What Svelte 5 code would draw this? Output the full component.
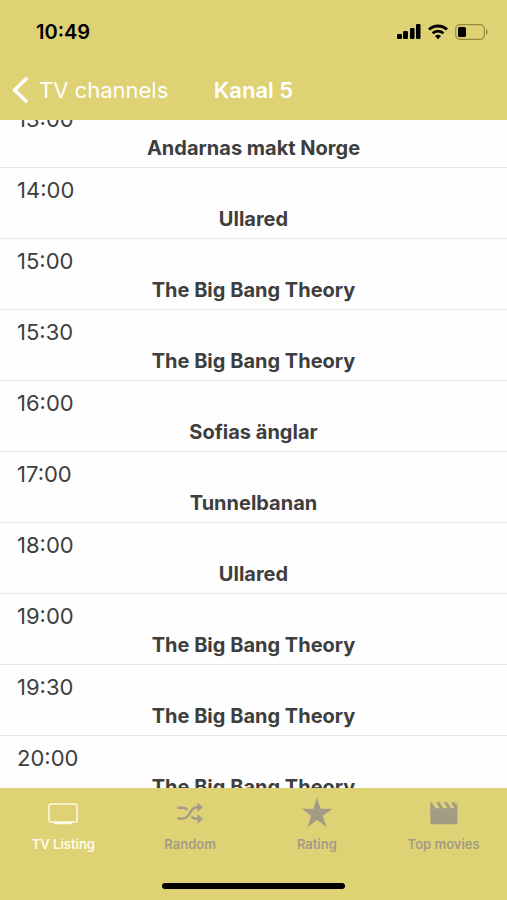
<script lang="ts">
    import { onMount } from 'svelte';

    type Show = { time: string; title: string };

    const shows: Show[] = [
        { time: '13:00', title: 'Andarnas makt Norge' },
        { time: '14:00', title: 'Ullared' },
        { time: '15:00', title: 'The Big Bang Theory' },
        { time: '15:30', title: 'The Big Bang Theory' },
        { time: '16:00', title: 'Sofias änglar' },
        { time: '17:00', title: 'Tunnelbanan' },
        { time: '18:00', title: 'Ullared' },
        { time: '19:00', title: 'The Big Bang Theory' },
        { time: '19:30', title: 'The Big Bang Theory' },
        { time: '20:00', title: 'The Big Bang Theory' },
    ];

    const tabs = [
        { id: 'listing', label: 'TV Listing' },
        { id: 'random', label: 'Random' },
        { id: 'rating', label: 'Rating' },
        { id: 'movies', label: 'Top movies' },
    ];

    let active = $state('listing');
    let list: HTMLElement;

    onMount(() => {
        list.scrollTop = 23;
    });
</script>

<div class="screen">
    <header>
        <div class="status">
            <span class="clock">10:49</span>
            <div class="status-icons">
                <svg width="24" height="16" viewBox="0 0 24 16">
                    <rect x="0" y="10" width="5" height="5" rx="1.2" />
                    <rect x="6" y="7" width="5" height="8" rx="1.2" />
                    <rect x="13" y="4" width="4.500" height="11" rx="1.2" />
                    <rect x="19" y="0" width="4.500" height="15" rx="1.2" />
                </svg>
                <svg width="20" height="16" viewBox="0 0 20 16">
                    <g fill="none" stroke="#000" stroke-width="2.8">
                        <path d="M1 5.600a13 13 0 0 1 18 0" />
                        <path d="M4.600 9.300a7.800 7.800 0 0 1 10.800 0" />
                    </g>
                    <path d="M10 15.200l-3-3.100a4.300 4.300 0 0 1 6 0z" />
                </svg>
                <svg width="33" height="16" viewBox="0 0 33 16">
                    <rect
                        x="0.7"
                        y="0.7"
                        width="28.6"
                        height="14.6"
                        rx="4"
                        fill="none"
                        stroke="#96893f"
                        stroke-width="1.2"
                    />
                    <rect x="3" y="3" width="8" height="10" rx="1.5" />
                    <path d="M31 5.200c2.200 1 2.200 4.600 0 5.600z" fill="#96893f" />
                </svg>
            </div>
        </div>
        <nav class="bar">
            <button type="button" class="back">
                <svg width="17" height="26" viewBox="0 0 17 26">
                    <path
                        d="M14 2L2.500 13l11.500 11"
                        fill="none"
                        stroke="#fff"
                        stroke-width="3.6"
                        stroke-linecap="round"
                        stroke-linejoin="round"
                    />
                </svg>
                TV channels
            </button>
            <h1>Kanal 5</h1>
        </nav>
    </header>

    <main bind:this={list}>
        <ul>
            {#each shows as show}
                <li>
                    <time>{show.time}</time>
                    <strong>{show.title}</strong>
                </li>
            {/each}
        </ul>
    </main>

    <footer>
        <nav class="tabs">
            {#each tabs as tab}
                <button
                    type="button"
                    class="tab"
                    class:active={active === tab.id}
                    onclick={() => (active = tab.id)}
                >
                    <svg width="32" height="32" viewBox="0 0 32 32">
                        {#if tab.id === 'listing'}
                            <rect
                                x="2"
                                y="7"
                                width="28"
                                height="18"
                                rx="1.5"
                                fill="none"
                                stroke="currentColor"
                                stroke-width="1.5"
                            />
                            <path d="M6 25h20l-2 2.200H8z" />
                        {:else if tab.id === 'random'}
                            <g
                                fill="none"
                                stroke="currentColor"
                                stroke-width="2.4"
                            >
                                <path
                                    d="M3.500 21.500h6c2.700 0 4-1.700 6-5l1.500-2.200c1.600-2.700 3-4 5.500-4h1.500"
                                />
                                <path d="M3.500 10.800h5.500c2 0 3.200.8 4.300 2.300" />
                                <path d="M17.500 19.500c1.200 1.500 2.500 2.300 4.500 2.300h2" />
                            </g>
                            <path d="M23.500 5.500l5.500 4.700-5.500 4.700z" />
                            <path d="M23.500 17.300l5.500 4.700-5.500 4.700z" />
                        {:else if tab.id === 'rating'}
                            <path
                                d="M16 0.500l3.600 11.300h11.900l-9.700 7 3.800 11.400-9.600-7.100-9.600 7.100 3.800-11.400-9.700-7h11.900z"
                            />
                        {:else}
                            <path
                                d="M2.300 5.200h1.500l3.700 6h4.200l-3.700-6h3.600l3.700 6h4.200l-3.700-6h3.600l3.700 6h3.200l-3.200-6h3.600l2 3.600V5.200H29.500v20a2 2 0 0 1-2 2h-23.200a2 2 0 0 1-2-2z"
                            />
                        {/if}
                    </svg>
                    {tab.label}
                </button>
            {/each}
        </nav>
        <div class="home"></div>
    </footer>
</div>

<style>
    :global(body) {
        margin: 0;
    }

    .screen {
        display: flex;
        flex-direction: column;
        height: 100vh;
        background-color: #fefefe;
        color: #3e3e3e;
        font-family: Inter, 'Liberation Sans', sans-serif;
    }

    header,
    footer {
        flex: none;
        background-color: #ded275;
    }

    .status {
        display: flex;
        justify-content: space-between;
        align-items: center;
        height: 60px;
        padding: 4px 19px 0 36px;
        box-sizing: border-box;
        color: #000;
    }

    .clock {
        font-size: 20px;
        font-weight: 600;
    }

    .status-icons {
        display: flex;
        gap: 7px;
    }

    .bar {
        display: grid;
        grid-template-columns: 1fr auto 1fr;
        align-items: center;
        height: 60px;
        padding: 0 12px;
        color: #fff;
    }

    button {
        border: none;
        padding: 0;
        background: none;
        font-family: inherit;
        cursor: pointer;
    }

    .back {
        display: flex;
        align-items: center;
        gap: 10px;
        color: #fff;
        font-size: 22px;
        white-space: nowrap;
    }

    h1 {
        margin: 0;
        font-size: 22px;
        font-weight: 600;
    }

    main {
        flex: 1;
        min-height: 0;
        overflow-y: auto;
        scrollbar-width: none;
    }

    ul {
        list-style: none;
        margin: 0;
        padding: 0;
    }

    li {
        display: flex;
        flex-direction: column;
        gap: 2px;
        padding: 9px 17px 5px;
        border-bottom: 1px solid #e8e8e8;
    }

    time {
        font-size: 22px;
        line-height: 26px;
    }

    strong {
        font-size: 20px;
        font-weight: 700;
        line-height: 28px;
        text-align: center;
    }

    footer {
        height: 112px;
        display: flex;
        flex-direction: column;
        justify-content: space-between;
    }

    .tabs {
        display: grid;
        grid-template-columns: repeat(4, 1fr);
        padding-top: 9px;
    }

    .tab {
        display: flex;
        flex-direction: column;
        align-items: center;
        gap: 7px;
        color: #a39c85;
        font-size: 13px;
        font-weight: 600;
        line-height: 16px;
    }

    .tab svg {
        fill: currentColor;
    }

    .active {
        color: #fffbe8;
    }

    .home {
        width: 36%;
        height: 6px;
        margin: 0 auto 11px;
        border-radius: 3px;
        background-color: #000;
    }
</style>
